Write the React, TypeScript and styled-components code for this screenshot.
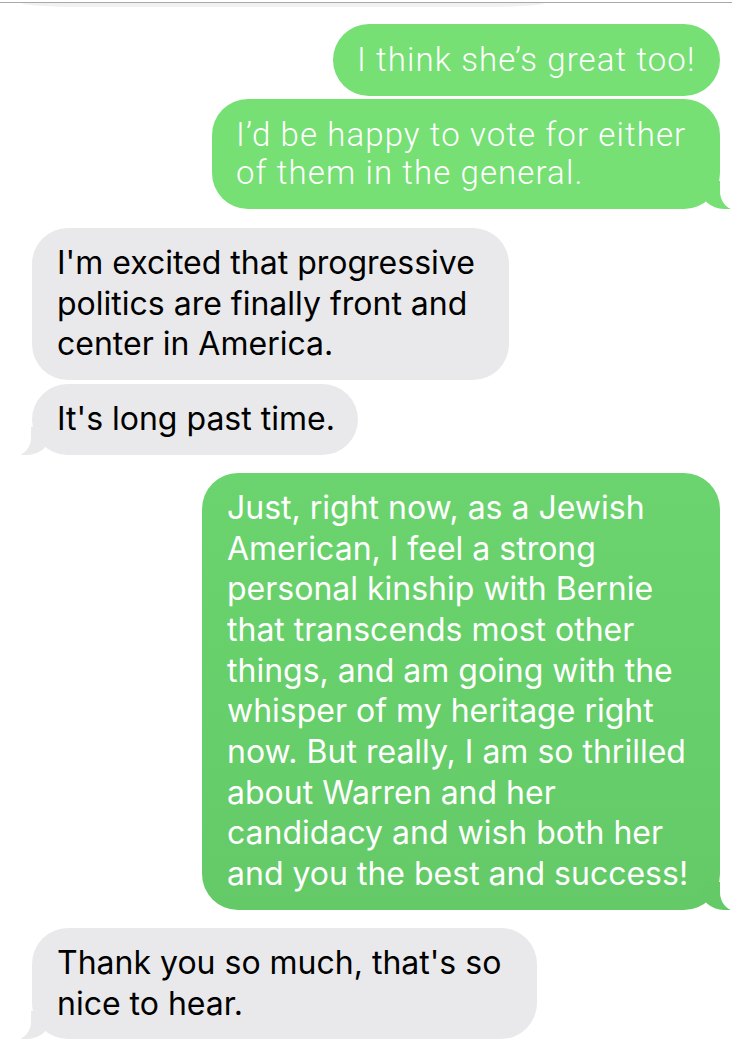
import { createGlobalStyle, styled } from "styled-components";

const GlobalStyle = createGlobalStyle`
  html, body {
    margin: 0;
    padding: 0;
    background: #ffffff;
  }
  body {
    font-family: "Inter", "Liberation Sans", sans-serif;
    -webkit-font-smoothing: antialiased;
  }
`;

const Thread = styled.div`
  display: flex;
  flex-direction: column;
  width: 732px;
  height: 1057px;
  overflow: hidden;
  padding: 0 12px 0 32px;
  box-sizing: border-box;
`;

const CutOff = styled.div`
  margin: 2px -12px 0 -32px;
  height: 8px;
  border-top: 1px solid #a9a9a9;
`;

const CutOffBubble = styled.div`
  margin-left: 22px;
  width: 522px;
  height: 4px;
  background: #f1f1f2;
  border-radius: 0 0 60px 60px / 0 0 4px 4px;
`;

interface BubbleProps {
  $sent?: boolean;
  $light?: boolean;
  $tail?: boolean;
  $gap: number;
  $width: number;
}

const Bubble = styled.div<BubbleProps>`
  position: relative;
  align-self: ${({ $sent }) => ($sent ? "flex-end" : "flex-start")};
  width: ${({ $width }) => $width}px;
  box-sizing: border-box;
  margin-top: ${({ $gap }) => $gap}px;
  padding: ${({ $light }) => ($light ? "17px 20px 17px 24px" : "15px 20px 15px 25px")};
  border-radius: 36px;
  background: ${({ $sent, $light }) =>
    !$sent ? "#e9e9eb" : $light ? "#76e074" : "linear-gradient(#6bd46e, #63ca67)"};
  color: ${({ $sent }) => ($sent ? "#ffffff" : "#000000")};
  font-family: ${({ $light }) =>
    $light ? '"Roboto", "Liberation Sans", sans-serif' : '"Inter", "Liberation Sans", sans-serif'};
  font-weight: ${({ $light }) => ($light ? 300 : 400)};
  font-size: ${({ $light }) => ($light ? 33 : 32)}px;
  line-height: ${({ $light }) => ($light ? 38 : 40.7)}px;
  letter-spacing: ${({ $light }) => ($light ? "1.1px" : "0px")};
  white-space: nowrap;

  ${({ $tail, $sent, $light }) =>
    $tail &&
    `
    &::before {
      content: "";
      position: absolute;
      bottom: 0;
      ${$sent ? "right: -10px;" : "left: -11px;"}
      width: 30px;
      height: 28px;
      background: ${!$sent ? "#e9e9eb" : $light ? "#76e074" : "#63ca67"};
      ${$sent ? "border-bottom-left-radius: 24px 22px;" : "border-bottom-right-radius: 24px 22px;"}
    }
    &::after {
      content: "";
      position: absolute;
      bottom: 0;
      ${$sent ? "right: -16px;" : "left: -17px;"}
      width: 16px;
      height: 30px;
      background: #ffffff;
      ${$sent ? "border-bottom-left-radius: 14px 18px;" : "border-bottom-right-radius: 14px 18px;"}
    }
  `}
`;

interface IMessage {
  sent?: boolean;
  light?: boolean;
  tail?: boolean;
  gap: number;
  width: number;
  lines: string[];
}

const messages: IMessage[] = [
  { sent: true, light: true, gap: 13, width: 387, lines: ["I think she\u2019s great too!"] },
  {
    sent: true,
    light: true,
    tail: true,
    gap: 3,
    width: 508,
    lines: ["I\u2019d be happy to vote for either", "of them in the general."],
  },
  {
    gap: 19,
    width: 477,
    lines: ["I'm excited that progressive", "politics are finally front and", "center in America."],
  },
  { tail: true, gap: 4, width: 326, lines: ["It's long past time."] },
  {
    sent: true,
    tail: true,
    gap: 18,
    width: 518,
    lines: [
      "Just, right now, as a Jewish",
      "American, I feel a strong",
      "personal kinship with Bernie",
      "that transcends most other",
      "things, and am going with the",
      "whisper of my heritage right",
      "now. But really, I am so thrilled",
      "about Warren and her",
      "candidacy and wish both her",
      "and you the best and success!",
    ],
  },
  { tail: true, gap: 18, width: 505, lines: ["Thank you so much, that's so", "nice to hear."] },
];

function App() {
  return (
    <>
      <GlobalStyle />
      <Thread>
        <CutOff>
          <CutOffBubble />
        </CutOff>
        {messages.map((m, i) => (
          <Bubble key={i} $sent={m.sent} $light={m.light} $tail={m.tail} $gap={m.gap} $width={m.width}>
            {m.lines.map((line, j) => (
              <div key={j}>{line}</div>
            ))}
          </Bubble>
        ))}
      </Thread>
    </>
  );
}

export default App;
